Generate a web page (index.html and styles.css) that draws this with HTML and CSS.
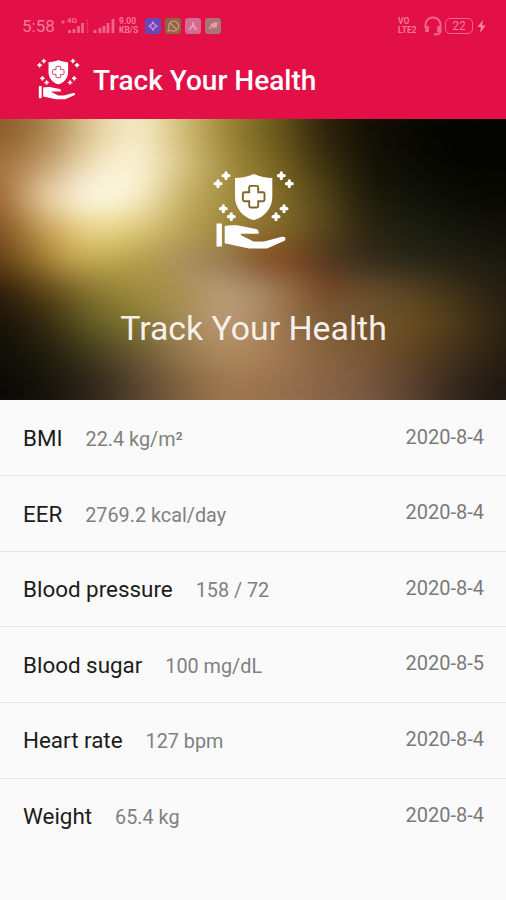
FILE: index.html
```
<!DOCTYPE html>
<html lang="en">
<head>
  <meta charset="UTF-8" />
  <meta name="viewport" content="width=device-width, initial-scale=1.0"/>
  <title>Track Your Health</title>
  <link rel="stylesheet" href="styles.css">
</head>
<body>
  <!-- Shared logo: shield, sparkles and open hand -->
  <svg class="defs" width="0" height="0">
    <defs>
      <path id="plus" d="M0 -2.9V2.9M-2.9 0H2.9" stroke="#fff" stroke-width="3.2" stroke-linecap="round"/>
      <symbol id="logo" viewBox="0 0 82 80">
        <path d="M41 4C47 6.8 53 7.8 59.3 8V27C59.3 38 51 48 40.7 50C30.4 48 22 38 22 27V8C28.5 7.8 35 6.8 41 4Z" fill="#fff"/>
        <path class="cross" d="M37.7 15.9H43.7Q45.2 15.9 45.2 17.4V22.2H50Q51.5 22.2 51.5 23.7V29.7Q51.5 31.2 50 31.2H45.2V36Q45.2 37.5 43.7 37.5H37.7Q36.2 37.5 36.2 36V31.2H31.4Q29.9 31.2 29.9 29.7V23.7Q29.9 22.2 31.4 22.2H36.2V17.4Q36.2 15.9 37.7 15.9Z" fill="#fff" stroke-width="1.9"/>
        <use href="#plus" x="13" y="5.7"/>
        <use href="#plus" x="5" y="13.7"/>
        <use href="#plus" x="10.3" y="38.7"/>
        <use href="#plus" x="18.3" y="46.7"/>
        <use href="#plus" x="68.3" y="5.7"/>
        <use href="#plus" x="76.3" y="13.7"/>
        <use href="#plus" x="71" y="38.7"/>
        <use href="#plus" x="63" y="46.7"/>
        <rect x="3.5" y="53.5" width="5.4" height="23" fill="#fff"/>
        <path d="M11.7 56Q17 54.8 24 55.3L43 59Q45.7 59.7 45.7 62V63.7H27.5L28.5 65.5L40.5 71.5H51L69 66.8Q72.7 66.2 72.5 68.5L72 70.5L54 78.4H36L11.7 73.3Z" fill="#fff"/>
      </symbol>
    </defs>
  </svg>

  <header class="top">
    <div class="status">
      <span class="clock">5:58</span>
      <span class="sim">
        <span class="net">4G</span>
        <svg width="29" height="16" viewBox="0 0 29 16">
          <path d="M0 4H4M2 2V6" stroke-width="1.2"/>
          <path d="M8.5 12V15M13 11V15M17.5 8V15M21.5 5V15" stroke-width="2.8"/>
          <path d="M26.5 1V15" stroke-width="1.5" opacity=".35"/>
        </svg>
      </span>
      <svg class="bars" width="22" height="16" viewBox="0 0 22 16">
        <path d="M2 12V15M7 10V15M11 8V15M15 5V15M20 1V15" stroke-width="2.8"/>
      </svg>
      <span class="stack speed"><span>9.00</span><span>KB/S</span></span>
      <span class="apps">
        <svg width="16" height="16" viewBox="0 0 16 16"><rect width="16" height="16" rx="3" fill="#6848b8"/><path d="M8 4L9.5 6.5L12 8L9.5 9.5L8 12L6.5 9.5L4 8L6.5 6.5Z" fill="none" stroke="#d996dc" stroke-width="1.2"/></svg>
        <svg width="16" height="16" viewBox="0 0 16 16"><rect width="16" height="16" rx="2" fill="#8c6742"/><path d="M3 13L4 10A5 5 0 1 1 6 12.3ZM5 5L11 11" fill="none" stroke="#d39688" stroke-width="1.2"/></svg>
        <svg width="16" height="16" viewBox="0 0 16 16"><rect width="16" height="16" rx="3" fill="#d26c91"/><path d="M8 4V7L5 11M8 7L11 11M4 11H6M10 11H12" fill="none" stroke="#f0a2b6" stroke-width="1.5"/></svg>
        <svg width="16" height="16" viewBox="0 0 16 16"><rect width="16" height="16" rx="3" fill="#a97575"/><path d="M4 11L7 8M6 7L9 5L12 5L11 9L8 9Z" fill="#e79aa7" stroke="#e79aa7" stroke-width="1.3"/></svg>
      </span>
      <span class="stack volte"><span>VO</span><span>LTE2</span></span>
      <svg class="headset" width="18" height="20" viewBox="0 0 18 20">
        <path d="M1.5 12V8.5A7.5 7 0 0 1 16.5 8.5V15Q16.5 18.5 10 18.5" stroke-width="2"/>
        <path d="M3 10V16M15 10V16" stroke-width="3.6"/>
      </svg>
      <span class="battery">22</span>
      <svg class="bolt" width="9" height="13" viewBox="0 0 9 13"><path d="M6 0L0.5 7H4L3 13L8.5 5.5H5Z"/></svg>
    </div>
    <div class="appbar">
      <svg class="appbar-logo"><use href="#logo"/></svg>
      <h1>Track Your Health</h1>
    </div>
  </header>

  <section class="hero">
    <!-- Out-of-focus backdrop, one colour band per row -->
    <div class="backdrop">
      <i></i><i></i><i></i><i></i><i></i><i></i><i></i><i></i><i></i>
    </div>
    <svg class="hero-logo"><use href="#logo"/></svg>
    <h2>Track Your Health</h2>
  </section>

  <ul class="records">
    <li><span class="name">BMI</span><span class="value">22.4 kg/m²</span><time>2020-8-4</time></li>
    <li><span class="name">EER</span><span class="value">2769.2 kcal/day</span><time>2020-8-4</time></li>
    <li><span class="name">Blood pressure</span><span class="value">158 / 72</span><time>2020-8-4</time></li>
    <li><span class="name">Blood sugar</span><span class="value">100 mg/dL</span><time>2020-8-5</time></li>
    <li><span class="name">Heart rate</span><span class="value">127 bpm</span><time>2020-8-4</time></li>
    <li><span class="name">Weight</span><span class="value">65.4 kg</span><time>2020-8-4</time></li>
  </ul>
</body>
</html>
```
FILE: styles.css
```
* {
  box-sizing: border-box;
}

body {
  margin: 0;
  height: 900px;
  background: #fafafa;
  font-family: Roboto, sans-serif;
  overflow: hidden;
}

svg {
  display: block;
  flex: none;
}

.defs {
  position: absolute;
}

/* Status bar and app bar */
.top {
  height: 119px;
  background: #e31048;
}

.status {
  display: flex;
  align-items: center;
  height: 52px;
  padding: 0 20px 0 22px;
  color: #f47a9b;
}

.status > svg, .sim svg {
  fill: none;
  stroke: #f0668b;
}

.clock {
  width: 39px;
  font-size: 17px;
}

.sim {
  position: relative;
}

.net {
  position: absolute;
  left: 6px;
  top: -1px;
  font-size: 8px;
  font-weight: 500;
  line-height: 8px;
}

.bars {
  margin-left: 3px;
}

.stack {
  display: flex;
  flex-direction: column;
  font-size: 9px;
  font-weight: 700;
  line-height: 9px;
}

.speed {
  width: 26px;
  margin-left: 4px;
  font-size: 8.5px;
}

.apps {
  display: flex;
  gap: 4px;
}

.volte {
  width: 20px;
  margin-left: auto;
  font-size: 8.6px;
}

.headset {
  margin-left: 6px;
}

.battery {
  width: 28px;
  height: 16px;
  margin-left: 3px;
  border: 1.5px solid #f0668b;
  border-radius: 5px;
  font-size: 12px;
  line-height: 14px;
  text-align: center;
}

.status > .bolt {
  margin-left: 4px;
  fill: #f58aa6;
  stroke: none;
}

.appbar {
  display: flex;
  align-items: center;
  height: 56px;
  padding-left: 37px;
}

.appbar-logo {
  width: 43px;
  height: 42px;
  margin-top: -3px;
  stroke: #c4455f;
}

h1, h2 {
  margin: 0;
  color: #fff;
}

h1 {
  margin-left: 13px;
  font-size: 28px;
  font-weight: 500;
}

/* Hero */
.hero {
  position: relative;
  height: 281px;
  padding-top: 51px;
  overflow: hidden;
}

.backdrop {
  position: absolute;
  left: -46px;
  right: -46px;
  top: -31px;
  bottom: -31px;
  display: grid;
  grid-template-rows: 2fr repeat(7, 1fr) 2fr;
  filter: blur(15px);
}

.backdrop i:nth-child(1) {
  background: linear-gradient(90deg, #8a5a26, #8a5a26, #a87f48, #e0cb96, #f9f0cc, #d2bc74, #96802f, #6b5a1c, #2e230a, #120e04, #080802, #030400, #040400, #040400);
}

.backdrop i:nth-child(2) {
  background: linear-gradient(90deg, #a5713a, #a5713a, #c5a070, #f5e6c0, #fff8e0, #d8c47e, #a38c3e, #7a6620, #40330f, #151204, #0a0b03, #050500, #060600, #060600);
}

.backdrop i:nth-child(3) {
  background: linear-gradient(90deg, #9c6530, #9c6530, #f0daae, #fffff4, #fbf2cc, #c7af62, #a18b40, #86702a, #55471a, #1c1a08, #11140a, #0a0b04, #080803, #080803);
}

.backdrop i:nth-child(4) {
  background: linear-gradient(90deg, #80501f, #80501f, #caa055, #f0dc90, #e2ca7a, #b9a350, #9c853c, #8a6f2b, #5c491a, #2b2210, #1b1e10, #14150a, #0f0f07, #0f0f07);
}

.backdrop i:nth-child(5) {
  background: linear-gradient(90deg, #5d3a14, #5d3a14, #8e6a26, #c9aa50, #c2aa50, #b09a4a, #a68e60, #93794e, #80451f 52%, #80451f 56%, #4b3420 63%, #2a2718, #232014, #1b190f, #1b190f);
}

.backdrop i:nth-child(6) {
  background: linear-gradient(90deg, #2c1a08, #2c1a08, #5a4315, #887530, #a08d3c, #ac9254, #bba182, #a0805c, #7a4724, #685030, #58431f, #3a2e18, #221c10, #221c10);
}

.backdrop i:nth-child(7) {
  background: linear-gradient(90deg, #17100a, #17100a, #33290f, #666026, #847a32, #a78a58, #bf9e7a, #a07a50, #7a5c38, #735630, #6a4e20, #4c3a18, #2a2110, #2a2110);
}

.backdrop i:nth-child(8) {
  background: linear-gradient(90deg, #0e0d06, #0e0d06, #1f1b0c, #3f3a18, #6a5a34, #9a7a50, #b08c60, #a47c54, #8a6440, #7a5632, #60421f, #40301a, #261c10, #261c10);
}

.backdrop i:nth-child(9) {
  background: linear-gradient(90deg, #080704, #080704, #15120a, #2c241a, #57432f, #80643f, #a07850, #96704c, #8a6448, #785840, #574030, #30241a, #1c1610, #1c1610);
}

.hero-logo {
  position: relative;
  width: 82px;
  height: 80px;
  margin: 0 auto;
  left: 1px;
  stroke: #806528;
}

#logo > path:not(.cross), #logo rect {
  stroke: none;
}

h2 {
  position: relative;
  margin-top: 59px;
  padding-left: 1px;
  color: #f7f0ea;
  font-size: 33.8px;
  font-weight: 400;
  line-height: 40px;
  text-align: center;
}

/* Records */
.records {
  margin: 0;
  padding: 0;
  list-style: none;
}

.records li {
  display: flex;
  align-items: baseline;
  height: 75.6px;
  padding: 24.5px 22px 0 23px;
  border-bottom: 1.5px solid #e4e4e4;
}

.records li:first-child {
  height: 76.2px;
  padding-top: 25px;
}

.records li:last-child {
  border-bottom: none;
}

.name {
  color: #1c1c1c;
  font-size: 22.4px;
}

.value {
  margin-left: 23px;
  color: #808080;
  font-size: 19.8px;
}

time {
  margin-left: auto;
  position: relative;
  top: -2.5px;
  color: #7a7a7a;
  font-size: 20px;
}
```
